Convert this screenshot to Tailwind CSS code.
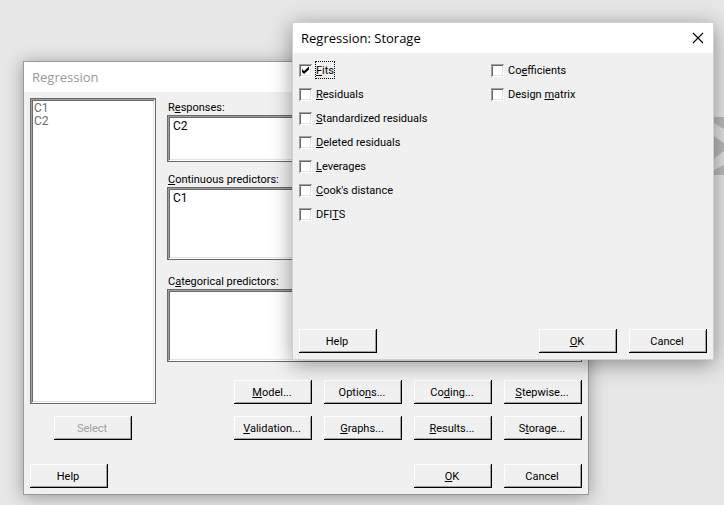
<!DOCTYPE html>
<html lang="en">
<head>
<meta charset="utf-8">
<meta name="viewport" content="width=device-width, initial-scale=1">
<title>Regression</title>
<script src="https://cdn.jsdelivr.net/npm/@tailwindcss/browser@4"></script>
</head>
<body class="bg-[#e6e6e6] font-['Roboto',sans-serif] text-[11px] leading-4 text-black">
<main class="relative min-h-screen overflow-hidden">

  <!-- Fragment of the application logo at the desktop edge -->
  <svg class="absolute top-[117px] right-0 h-[58px] w-3" viewBox="0 0 12 58" aria-hidden="true">
    <rect width="12" height="58" fill="#bababa"/>
    <path d="M0 5 L12 12 V26 L0 18 Z M0 43 L12 34 V48 L0 54 Z" fill="#e0e0e0"/>
  </svg>

  <!-- Regression dialog -->
  <section aria-label="Regression" class="absolute top-[61px] left-[23px] w-[566px] border border-[#999] bg-[#f0f0f0] shadow-[0_2px_16px_rgba(0,0,0,0.35)]">
    <header class="flex h-[30px] items-center bg-white px-2">
      <h1 class="font-['Open_Sans',sans-serif] text-[13px] text-[#999]">Regression</h1>
    </header>
    <form class="p-1.5 pr-[5px]">
      <div class="flex gap-[11px]">
        <div class="flex flex-col items-center gap-3">
          <select multiple disabled aria-label="Variables" class="h-[306px] w-[126px] appearance-none overflow-hidden border border-[#696969] bg-white px-[3px] py-0.5 text-[12px] leading-[13px] text-[#6d6d6d] opacity-100 shadow-[inset_1px_1px_0_#a0a0a0,inset_-1px_-1px_0_#fff,inset_2px_2px_0_#696969,inset_-2px_-2px_0_#e3e3e3]">
            <option class="h-[13px] min-h-0 p-0 text-[#6d6d6d]">C1</option>
            <option class="h-[13px] min-h-0 p-0 text-[#6d6d6d]">C2</option>
          </select>
          <button type="button" disabled class="h-6 w-[78px] pt-0.5 pr-0.5 text-[#a0a0a0] shadow-[inset_-1px_-1px_0_#000,inset_1px_1px_0_#fff,inset_-2px_-2px_0_#a0a0a0]">Select</button>
        </div>
        <div class="flex flex-1 flex-col pt-px">
          <label for="resp" class="px-px pt-0.5 leading-[14px]">R<u>e</u>sponses:</label>
          <textarea id="resp" class="mr-px mb-2 h-[47px] resize-none border border-[#696969] bg-white px-[5px] py-px text-[12px] leading-[18px] shadow-[inset_1px_1px_0_#a0a0a0,inset_-1px_-1px_0_#fff,inset_2px_2px_0_#696969,inset_-2px_-2px_0_#e3e3e3]">C2</textarea>
          <label for="cont" class="px-px pt-[3px] leading-[14px]"><u>C</u>ontinuous predictors:</label>
          <textarea id="cont" class="mr-px mb-3 h-[73px] resize-none border border-[#696969] bg-white px-[5px] py-px text-[12px] leading-[18px] shadow-[inset_1px_1px_0_#a0a0a0,inset_-1px_-1px_0_#fff,inset_2px_2px_0_#696969,inset_-2px_-2px_0_#e3e3e3]">C1</textarea>
          <label for="cat" class="px-px pt-[3px] leading-[14px]">C<u>a</u>tegorical predictors:</label>
          <textarea id="cat" class="mr-px mb-[18px] h-[73px] resize-none border border-[#696969] bg-white px-[5px] py-px text-[12px] leading-[18px] shadow-[inset_1px_1px_0_#a0a0a0,inset_-1px_-1px_0_#fff,inset_2px_2px_0_#696969,inset_-2px_-2px_0_#e3e3e3]"></textarea>
          <div class="grid grid-cols-[repeat(4,78px)] justify-end gap-3 pr-px">
            <button type="button" class="h-6 pt-0.5 pr-0.5 shadow-[inset_-1px_-1px_0_#000,inset_1px_1px_0_#fff,inset_-2px_-2px_0_#a0a0a0]"><u>M</u>odel...</button>
            <button type="button" class="h-6 pt-0.5 pr-0.5 shadow-[inset_-1px_-1px_0_#000,inset_1px_1px_0_#fff,inset_-2px_-2px_0_#a0a0a0]">Optio<u>n</u>s...</button>
            <button type="button" class="h-6 pt-0.5 pr-0.5 shadow-[inset_-1px_-1px_0_#000,inset_1px_1px_0_#fff,inset_-2px_-2px_0_#a0a0a0]">Co<u>d</u>ing...</button>
            <button type="button" class="h-6 pt-0.5 pr-0.5 shadow-[inset_-1px_-1px_0_#000,inset_1px_1px_0_#fff,inset_-2px_-2px_0_#a0a0a0]"><u>S</u>tepwise...</button>
            <button type="button" class="h-6 pt-0.5 pr-0.5 shadow-[inset_-1px_-1px_0_#000,inset_1px_1px_0_#fff,inset_-2px_-2px_0_#a0a0a0]"><u>V</u>alidation...</button>
            <button type="button" class="h-6 pt-0.5 pr-0.5 shadow-[inset_-1px_-1px_0_#000,inset_1px_1px_0_#fff,inset_-2px_-2px_0_#a0a0a0]"><u>G</u>raphs...</button>
            <button type="button" class="h-6 pt-0.5 pr-0.5 shadow-[inset_-1px_-1px_0_#000,inset_1px_1px_0_#fff,inset_-2px_-2px_0_#a0a0a0]"><u>R</u>esults...</button>
            <button type="button" class="h-6 pt-0.5 pr-0.5 shadow-[inset_-1px_-1px_0_#000,inset_1px_1px_0_#fff,inset_-2px_-2px_0_#a0a0a0]">S<u>t</u>orage...</button>
          </div>
        </div>
      </div>
      <div class="mt-6 flex gap-3 pr-px">
        <button type="button" class="mr-auto h-6 w-[78px] pt-0.5 pr-0.5 shadow-[inset_-1px_-1px_0_#000,inset_1px_1px_0_#fff,inset_-2px_-2px_0_#a0a0a0]">Help</button>
        <button type="button" class="h-6 w-[78px] pt-0.5 pr-0.5 shadow-[inset_-1px_-1px_0_#000,inset_1px_1px_0_#fff,inset_-2px_-2px_0_#a0a0a0]"><u>O</u>K</button>
        <button type="button" class="h-6 w-[78px] pt-0.5 pr-0.5 shadow-[inset_-1px_-1px_0_#000,inset_1px_1px_0_#fff,inset_-2px_-2px_0_#a0a0a0]">Cancel</button>
      </div>
    </form>
  </section>

  <!-- Storage dialog -->
  <section aria-label="Regression: Storage" class="absolute top-[22px] left-[292px] w-[422px] border border-[#d0d0d0] bg-[#f0f0f0] shadow-[0_4px_20px_rgba(0,0,0,0.4)]">
    <header class="flex h-[30px] items-center justify-between bg-white px-2">
      <h2 class="font-['Open_Sans',sans-serif] text-[13px]">Regression: Storage</h2>
      <button type="button" aria-label="Close" class="mr-px">
        <svg class="size-3" viewBox="0 0 12 12" fill="none" stroke="#000" stroke-width="1.1"><path d="M1 1 L11 11 M11 1 L1 11"/></svg>
      </button>
    </header>
    <form class="p-1.5">
      <div class="grid grid-cols-[192px_1fr]">
        <div class="flex flex-col gap-2 pt-[3px]">
          <label class="flex items-center gap-1">
            <span class="grid">
              <input type="checkbox" checked class="peer col-start-1 row-start-1 size-[13px] appearance-none bg-white shadow-[inset_1px_1px_0_#a0a0a0,inset_-1px_-1px_0_#fff,inset_2px_2px_0_#696969,inset_-2px_-2px_0_#e3e3e3]">
              <svg class="pointer-events-none invisible col-start-1 row-start-1 size-[13px] peer-checked:visible" viewBox="0 0 13 13" aria-hidden="true"><path d="M3 5 L5 7 L10 2.5 V5.5 L5 10 L3 8 Z"/></svg>
            </span>
            <span class="pt-0.5 leading-[14px] outline-1 outline-dotted outline-black"><u>F</u>its</span>
          </label>
          <label class="flex items-center gap-1"><input type="checkbox" class="size-[13px] appearance-none bg-white shadow-[inset_1px_1px_0_#a0a0a0,inset_-1px_-1px_0_#fff,inset_2px_2px_0_#696969,inset_-2px_-2px_0_#e3e3e3]"><span class="pt-0.5 leading-[14px]"><u>R</u>esiduals</span></label>
          <label class="flex items-center gap-1"><input type="checkbox" class="size-[13px] appearance-none bg-white shadow-[inset_1px_1px_0_#a0a0a0,inset_-1px_-1px_0_#fff,inset_2px_2px_0_#696969,inset_-2px_-2px_0_#e3e3e3]"><span class="pt-0.5 leading-[14px]"><u>S</u>tandardized residuals</span></label>
          <label class="flex items-center gap-1"><input type="checkbox" class="size-[13px] appearance-none bg-white shadow-[inset_1px_1px_0_#a0a0a0,inset_-1px_-1px_0_#fff,inset_2px_2px_0_#696969,inset_-2px_-2px_0_#e3e3e3]"><span class="pt-0.5 leading-[14px]"><u>D</u>eleted residuals</span></label>
          <label class="flex items-center gap-1"><input type="checkbox" class="size-[13px] appearance-none bg-white shadow-[inset_1px_1px_0_#a0a0a0,inset_-1px_-1px_0_#fff,inset_2px_2px_0_#696969,inset_-2px_-2px_0_#e3e3e3]"><span class="pt-0.5 leading-[14px]"><u>L</u>everages</span></label>
          <label class="flex items-center gap-1"><input type="checkbox" class="size-[13px] appearance-none bg-white shadow-[inset_1px_1px_0_#a0a0a0,inset_-1px_-1px_0_#fff,inset_2px_2px_0_#696969,inset_-2px_-2px_0_#e3e3e3]"><span class="pt-0.5 leading-[14px]"><u>C</u>ook's distance</span></label>
          <label class="flex items-center gap-1"><input type="checkbox" class="size-[13px] appearance-none bg-white shadow-[inset_1px_1px_0_#a0a0a0,inset_-1px_-1px_0_#fff,inset_2px_2px_0_#696969,inset_-2px_-2px_0_#e3e3e3]"><span class="pt-0.5 leading-[14px]">DFI<u>T</u>S</span></label>
        </div>
        <div class="flex flex-col gap-2 pt-[3px]">
          <label class="flex items-center gap-1"><input type="checkbox" class="size-[13px] appearance-none bg-white shadow-[inset_1px_1px_0_#a0a0a0,inset_-1px_-1px_0_#fff,inset_2px_2px_0_#696969,inset_-2px_-2px_0_#e3e3e3]"><span class="pt-0.5 leading-[14px]">Co<u>e</u>fficients</span></label>
          <label class="flex items-center gap-1"><input type="checkbox" class="size-[13px] appearance-none bg-white shadow-[inset_1px_1px_0_#a0a0a0,inset_-1px_-1px_0_#fff,inset_2px_2px_0_#696969,inset_-2px_-2px_0_#e3e3e3]"><span class="pt-0.5 leading-[14px]">Design <u>m</u>atrix</span></label>
        </div>
      </div>
      <div class="mt-[107px] flex gap-3">
        <button type="button" class="mr-auto h-6 w-[78px] pt-0.5 pr-0.5 shadow-[inset_-1px_-1px_0_#000,inset_1px_1px_0_#fff,inset_-2px_-2px_0_#a0a0a0]">Help</button>
        <button type="button" class="h-6 w-[78px] pt-0.5 pr-0.5 shadow-[inset_-1px_-1px_0_#000,inset_1px_1px_0_#fff,inset_-2px_-2px_0_#a0a0a0]"><u>O</u>K</button>
        <button type="button" class="h-6 w-[78px] pt-0.5 pr-0.5 shadow-[inset_-1px_-1px_0_#000,inset_1px_1px_0_#fff,inset_-2px_-2px_0_#a0a0a0]">Cancel</button>
      </div>
    </form>
  </section>
</main>
</body>
</html>
